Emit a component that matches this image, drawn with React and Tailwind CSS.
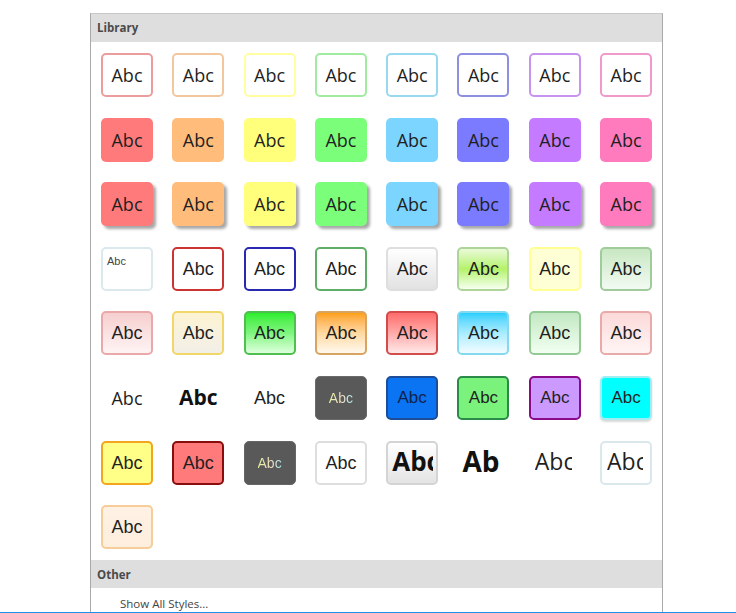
import React from 'react';

const txt = "font-['Open_Sans',sans-serif] text-[18px] leading-none text-[#1f1f1f]";
const arial = "font-['Liberation_Sans',Arial,sans-serif] text-[18px] leading-none text-[#1f1f1f]";
const rainbow = "font-['Liberation_Sans',Arial,sans-serif] text-[14px] leading-none bg-linear-to-r from-[#e4f4a0] via-[#f2dcc0] to-[#a6eef2] bg-clip-text text-transparent";
const drop = 'shadow-[3px_3px_3px_rgba(0,0,0,0.35)]';

const tiles = [
    // 1. light outlines
    { box: 'border-2 border-[#eb9d9d] bg-white' },
    { box: 'border-2 border-[#f3c79d] bg-white' },
    { box: 'border-2 border-[#ffffa0] bg-white' },
    { box: 'border-2 border-[#a0eba0] bg-white' },
    { box: 'border-2 border-[#98d9ef] bg-white' },
    { box: 'border-2 border-[#8f8fe2] bg-white' },
    { box: 'border-2 border-[#c693ef] bg-white' },
    { box: 'border-2 border-[#ef9acb] bg-white' },

    // 2. flat fills
    { box: 'bg-[#ff7b7b]' },
    { box: 'bg-[#ffbc7b]' },
    { box: 'bg-[#ffff7b]' },
    { box: 'bg-[#7bff7b]' },
    { box: 'bg-[#7bd5ff]' },
    { box: 'bg-[#7b7bff]' },
    { box: 'bg-[#c57bff]' },
    { box: 'bg-[#ff7bbd]' },

    // 3. fills with shadow
    { box: `bg-[#ff7b7b] ${drop}` },
    { box: `bg-[#ffbc7b] ${drop}` },
    { box: `bg-[#ffff7b] ${drop}` },
    { box: `bg-[#7bff7b] ${drop}` },
    { box: `bg-[#7bd5ff] ${drop}` },
    { box: `bg-[#7b7bff] ${drop}` },
    { box: `bg-[#c57bff] ${drop}` },
    { box: `bg-[#ff7bbd] ${drop}` },

    // 4. mixed
    { box: 'border-2 border-[#dbe8ee] bg-white !items-start !justify-start pl-[4px] pt-[7px]', text: "font-['Liberation_Sans',Arial,sans-serif] text-[11px] leading-none text-[#444]" },
    { box: 'border-2 border-[#cc3434] bg-white', text: arial },
    { box: 'border-2 border-[#2828b0] bg-white', text: arial },
    { box: 'border-2 border-[#5fae68] bg-white', text: arial },
    { box: 'border-2 border-[#dedede] bg-linear-to-b from-white to-[#e2e2e2]', text: arial },
    { box: 'border-2 border-[#aed49a] bg-linear-to-b from-[#eafad6] via-[#b4f266] to-[#f6ffee]', text: arial },
    { box: 'border-2 border-[#ffff94] bg-[#ffffd6]', text: arial },
    { box: 'border-2 border-[#a0cc9c] bg-linear-to-b from-[#c8e8c2] to-[#f3faf3]', text: arial },

    // 5. glossy gradients
    { box: 'border-2 border-[#eaa8a8] bg-linear-to-b from-[#f6cfcf] to-[#fef4f4]', text: arial },
    { box: 'border-2 border-[#f1d76a] bg-linear-to-b from-[#fdf3d2] to-[#f2efe8]', text: arial },
    { box: 'border-2 border-[#4fc04f] bg-linear-to-b from-[#28ee28] via-[#7ef57e] to-[#dcffdc]', text: arial },
    { box: 'border-2 border-[#d9a462] bg-linear-to-b from-[#ffa108] via-[#ffd9a0] to-[#fff8ee]', text: arial },
    { box: 'border-2 border-[#d24c4c] bg-linear-to-b from-[#ff6c6c] via-[#ffaaaa] to-[#ffe8e8]', text: arial },
    { box: 'border-2 border-[#84d9f0] bg-linear-to-b from-[#22d0ff] via-[#a8ecff] to-[#f2fcff]', text: arial },
    { box: 'border-2 border-[#94ca94] bg-linear-to-b from-[#c2e8c2] to-[#f2fff2]', text: arial },
    { box: 'border-2 border-[#eaaaaa] bg-linear-to-b from-[#fcd9d9] to-[#fff5f5]', text: arial },

    // 6. plain text and dark/coloured boxes
    { box: '', text: txt },
    { box: '', text: "font-['Open_Sans',sans-serif] text-[21px] font-bold leading-none text-[#111]" },
    { box: '', text: arial },
    { box: 'border border-[#6a6a6a] bg-[#595959]', text: rainbow },
    { box: 'border-2 border-[#1d4c98] bg-[#0a74f2]', text: "font-['Liberation_Sans',Arial,sans-serif] text-[17px] leading-none text-[#10224a]" },
    { box: 'border-2 border-[#2a8a48] bg-[#7bf27b]', text: "font-['Liberation_Sans',Arial,sans-serif] text-[17px] leading-none text-[#1f1f1f]" },
    { box: 'border-2 border-[#8a0a8a] bg-[#cc9aff]', text: "font-['Liberation_Sans',Arial,sans-serif] text-[17px] leading-none text-[#1f1f1f]" },
    { box: 'border-2 border-[#9eeef2] bg-[#00ffff] shadow-[0_2px_2px_rgba(0,0,0,0.15)]', text: "font-['Liberation_Sans',Arial,sans-serif] text-[17px] leading-none text-[#1f1f1f]" },

    // 7. bordered and clipped previews
    { box: 'border-2 border-[#f2a51e] bg-[#ffff88]', text: arial },
    { box: 'border-2 border-[#8a0d0d] bg-[#ff7b7b]', text: arial },
    { box: 'border border-[#666] bg-[#595959]', text: rainbow },
    { box: 'border-2 border-[#dedede] bg-white', text: arial },
    { box: 'border-2 border-[#d4d4d4] bg-linear-to-b from-white to-[#e4e4e4] !justify-start pl-[4px]', clip: 'w-[41px]', text: "font-['Open_Sans',sans-serif] text-[26px] font-bold leading-none text-[#111]" },
    { box: '!justify-start pl-[5px]', clip: 'w-[38px]', text: "font-['Open_Sans',sans-serif] text-[28px] font-bold leading-none text-[#111]" },
    { box: '!justify-start pl-[6px]', clip: 'w-[37px]', text: "font-['Open_Sans',sans-serif] text-[23px] leading-none text-[#1f1f1f]" },
    { box: 'border-2 border-[#dae8ee] bg-white !justify-start pl-[5px]', clip: 'w-[36px]', text: "font-['Open_Sans',sans-serif] text-[23px] leading-none text-[#1f1f1f]" },

    // 8.
    { box: 'border-2 border-[#f6cc98] bg-linear-to-b from-[#fff2e4] to-[#fdeedd]', text: arial },
];

function Tile({ box, text, clip }) {
    return (
        <div className={`flex h-[44px] w-[52px] items-center justify-center overflow-hidden rounded-[5px] ${box}`}>
            {clip ? (
                <span className={`block overflow-hidden whitespace-nowrap ${clip}`}>
                    <span className={text}>Abc</span>
                </span>
            ) : (
                <span className={text || txt}>Abc</span>
            )}
        </div>
    );
}

function SectionHeader({ children }) {
    return (
        <div className="flex h-[28px] items-center bg-[#dedede] pl-[6px] font-['Open_Sans',sans-serif] text-[11.5px] font-bold text-[#4a4a4a]">
            {children}
        </div>
    );
}

export default function App() {
    return (
        <div className="flex h-[613px] w-[736px] flex-col overflow-hidden bg-white pt-[13px]">
            <div className="ml-[90px] flex w-[573px] flex-1 flex-col border-x border-t border-x-[#a9a9a9] border-t-[#c8c8c8]">
                <SectionHeader>Library</SectionHeader>

                {/* style gallery */}
                <div className="grid grid-cols-[repeat(8,52px)] gap-x-[19.3px] gap-y-[20.6px] pb-[11px] pl-[10px] pt-[11px]">
                    {tiles.map((t, i) => (
                        <Tile key={i} {...t} />
                    ))}
                </div>

                <SectionHeader>Other</SectionHeader>
                <div className="pl-[29px] pt-[7px] font-['Open_Sans',sans-serif] text-[11.5px] text-[#444]">
                    Show All Styles...
                </div>
            </div>
            <div className="h-[2px] bg-[#1e8ee6]" />
        </div>
    );
}
